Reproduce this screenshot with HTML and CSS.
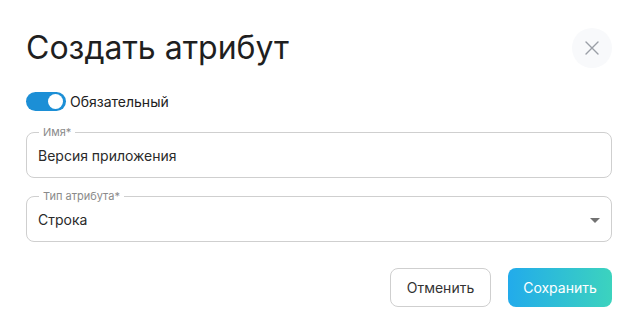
FILE: index.html
```html
<!DOCTYPE html>
<html lang="ru">

<head>
    <meta charset="UTF-8" />
    <meta name="viewport" content="width=device-width, initial-scale=1.0" />
    <link rel="stylesheet" href="styles.css">
    <title>Создать атрибут</title>
</head>

<body>
    <div class="dialog">
        <div class="dialog-head">
            <h1 class="dialog-title">Создать атрибут</h1>
            <button class="close-btn" aria-label="Закрыть">
                <svg width="14" height="14" viewBox="0 0 14 14">
                    <path d="M1 1L13 13M13 1L1 13" stroke="#9a9ea6" stroke-width="1.4" fill="none" stroke-linecap="round" />
                </svg>
            </button>
        </div>
        <label class="switch-row">
            <span class="switch"><span class="switch-knob"></span></span>
            <span class="switch-label">Обязательный</span>
        </label>
        <div class="field">
            <span class="field-label">Имя*</span>
            <div class="field-value">Версия приложения</div>
        </div>
        <div class="field field-select">
            <span class="field-label">Тип атрибута*</span>
            <div class="field-value">Строка</div>
            <span class="select-arrow"></span>
        </div>
        <div class="actions">
            <button class="btn btn-cancel">Отменить</button>
            <button class="btn btn-save">Сохранить</button>
        </div>
    </div>
</body>

</html>
```

FILE: styles.css
```css
* {
    margin: 0;
    padding: 0;
    box-sizing: border-box;
}

body {
    background-color: #fff;
    font-family: Inter, 'Noto Sans', sans-serif;
    color: #222;
}

.dialog {
    padding: 28px 25px 0 26px;
    display: flex;
    flex-direction: column;
}

.dialog-head {
    display: flex;
    justify-content: space-between;
    align-items: center;
    height: 40px;
}

.dialog-title {
    font-size: 32px;
    font-weight: 400;
    line-height: 40px;
    color: #1f1f1f;
}

.close-btn {
    width: 40px;
    height: 40px;
    border-radius: 50%;
    border: none;
    background-color: #f8f9fb;
    display: flex;
    align-items: center;
    justify-content: center;
    cursor: pointer;
}

.switch-row {
    display: flex;
    align-items: center;
    gap: 4px;
    margin-top: 24px;
    height: 19px;
}

.switch {
    width: 40px;
    height: 19px;
    border-radius: 10px;
    background-color: #1c8fd6;
    display: flex;
    align-items: center;
    justify-content: flex-end;
    padding-right: 3px;
}

.switch-knob {
    width: 15px;
    height: 15px;
    border-radius: 50%;
    background-color: #fff;
}

.switch-label {
    font-size: 14px;
    color: #222;
}

.field {
    position: relative;
    margin-top: 21px;
    height: 46px;
    border: 1px solid #cfcfcf;
    border-radius: 8px;
    display: flex;
    align-items: center;
    padding: 0 11px;
}

.field-select {
    margin-top: 18px;
}

.field-label {
    position: absolute;
    left: 12px;
    top: -7px;
    padding: 0 4px;
    background-color: #fff;
    font-size: 11px;
    line-height: 12px;
    color: #8a8a8a;
}

.field-value {
    font-size: 14px;
    color: #2a2a2a;
    padding-top: 1px;
}

.select-arrow {
    position: absolute;
    right: 11px;
    top: 21px;
    border-left: 5px solid transparent;
    border-right: 5px solid transparent;
    border-top: 5px solid #727272;
}

.actions {
    display: flex;
    justify-content: flex-end;
    gap: 17px;
    margin-top: 26px;
}

.btn {
    height: 39px;
    border-radius: 8px;
    font-family: Inter, 'Noto Sans', sans-serif;
    font-size: 14px;
    cursor: pointer;
}

.btn-cancel {
    width: 101px;
    background-color: #fff;
    border: 1px solid #cfcfcf;
    color: #333;
}

.btn-save {
    width: 104px;
    border: none;
    color: #fff;
    background: linear-gradient(90deg, #22abeb, #3cd3be);
}
```
